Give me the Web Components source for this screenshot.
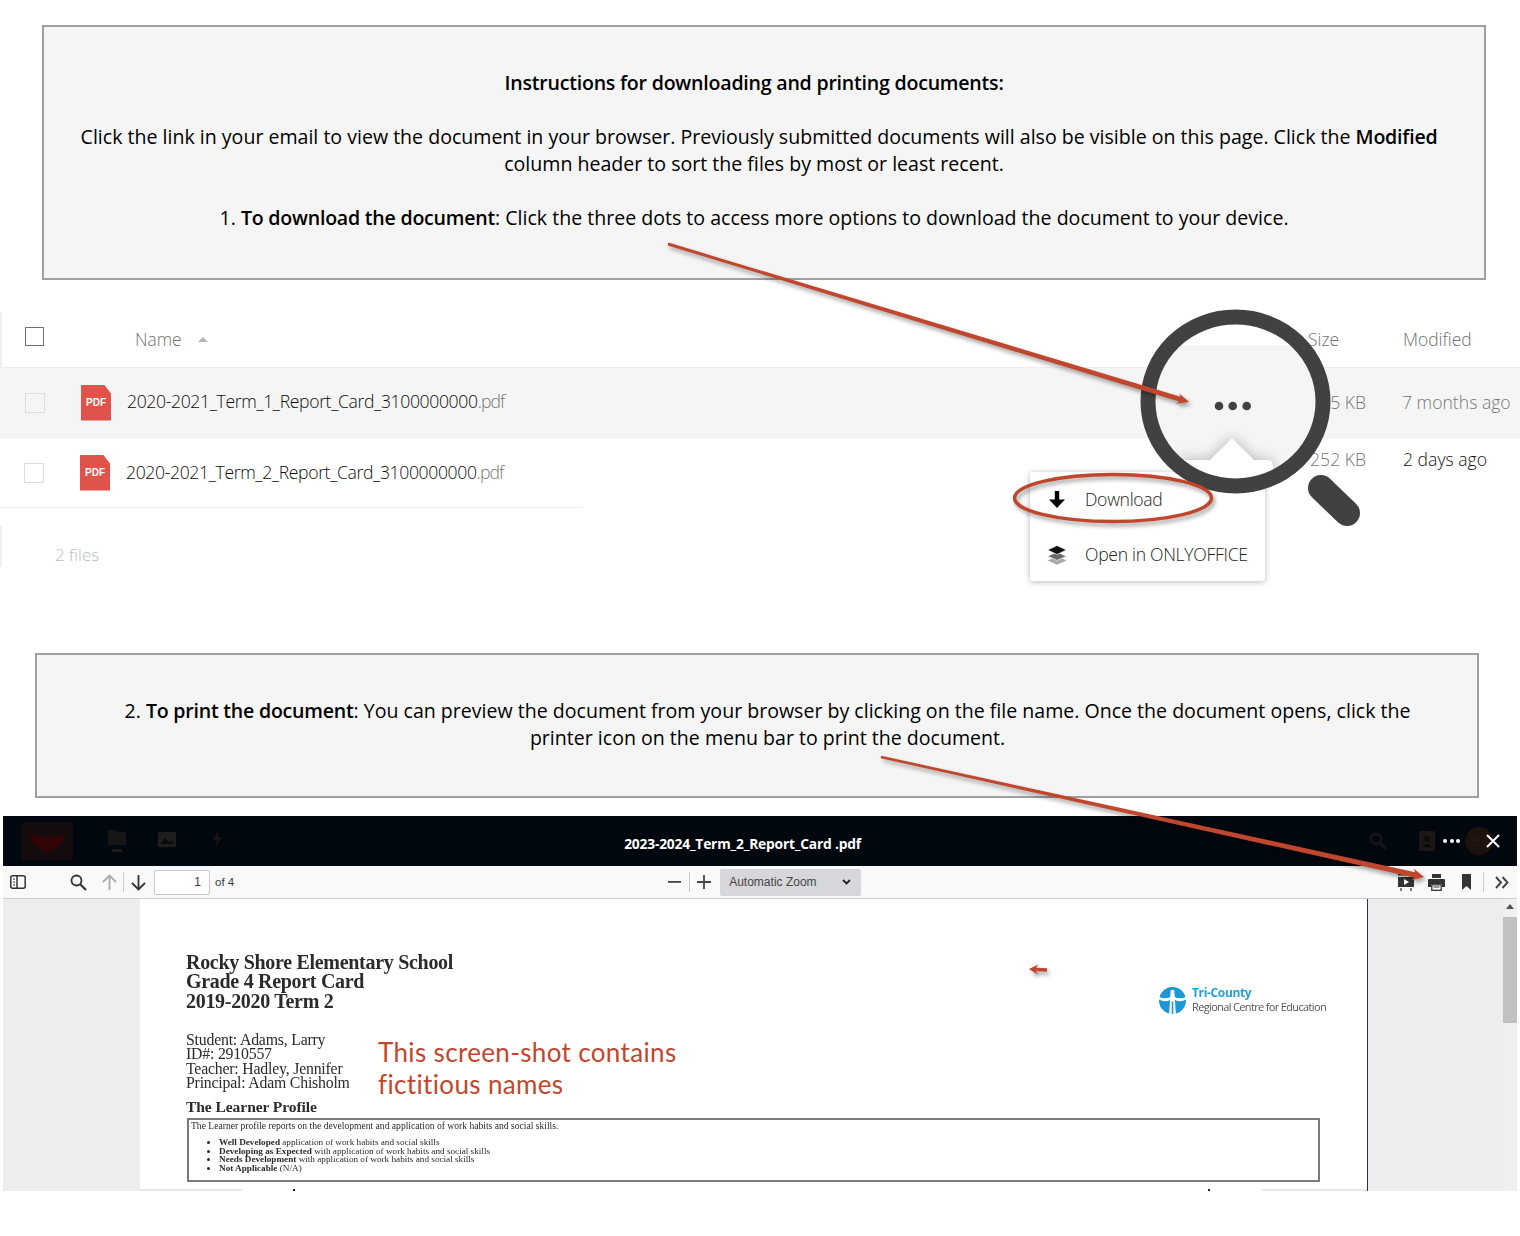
<!DOCTYPE html>
<html lang="en">
<head>
<meta charset="utf-8">
<title>Instructions for downloading and printing documents</title>
<style>
  html, body { margin: 0; padding: 0; background: #fff; }
</style>
</head>
<body>
<report-page>
  <note-box style="--box-left: 42px; --box-top: 25px; --box-height: 255px; --pad-r: 20px">
    <strong>Instructions for downloading and printing documents:</strong><br><br>
    <span style="padding-left: 10px">Click the link in your email to view the document in your browser. Previously submitted documents will also be visible on this page. Click the <b style="font-weight: 600; letter-spacing: -0.22px">Modified</b></span><br>
    column header to sort the files by most or least recent.<br><br>
    1. <strong>To download the document</strong>: Click the three dots to access more options to download the document to your device.
  </note-box>

  <file-list style="--list-top: 32px">
    <file-row name="2020-2021_Term_1_Report_Card_3100000000" ext=".pdf" size="5 KB" modified="7 months ago" hovered></file-row>
    <file-row name="2020-2021_Term_2_Report_Card_3100000000" ext=".pdf" size="252 KB" modified="2 days ago" recent></file-row>
  </file-list>

  <note-box style="--box-left: 35px; --box-top: 86px; --box-height: 145px; --pad-l: 21px">
    2. <strong>To print the document</strong>: You can preview the document from your browser by clicking on the file name. Once the document opens, click the<br>
    printer icon on the menu bar to print the document.
  </note-box>

  <pdf-viewer title-text="2023-2024_Term_2_Report_Card .pdf">
    <report-doc></report-doc>
  </pdf-viewer>

  <action-menu></action-menu>
  <annotation-layer></annotation-layer>
</report-page>

<script>
// page frame
class ReportPage extends HTMLElement {
  constructor() {
    super()
    this.attachShadow({ mode: 'open' })
    this.shadowRoot.innerHTML = `
      <style>
        :host { display: block; position: relative; width: 1520px; height: 1236px; overflow: hidden; background: #fff; }
      </style>
      <slot></slot>
    `
  }
}

// grey instruction box
class NoteBox extends HTMLElement {
  constructor() {
    super()
    this.attachShadow({ mode: 'open' })
    this.shadowRoot.innerHTML = `
      <style>
        :host {
          display: block;
          box-sizing: border-box;
          width: 1444px;
          height: var(--box-height);
          margin: var(--box-top) 0 0 var(--box-left);
          padding: 42px var(--pad-r, 0) 0 var(--pad-l, 0);
          border: 2px solid #a0a0a0;
          background: #f5f5f5;
          color: #000;
          font: 400 19.57px/27px "Open Sans", sans-serif;
          text-align: center;
          white-space: nowrap;
        }
        ::slotted(strong) { font-weight: 600; letter-spacing: -0.22px; }
      </style>
      <slot></slot>
    `
  }
}

// file table with its header and footer
class FileList extends HTMLElement {
  constructor() {
    super()
    this.attachShadow({ mode: 'open' })
    this.shadowRoot.innerHTML = `
      <style>
        :host {
          display: block;
          margin-top: var(--list-top);
          font-family: "Open Sans", sans-serif;
          font-weight: 300;
        }
        .head {
          display: flex;
          align-items: center;
          height: 55px;
          box-sizing: border-box;
          padding-left: 25px;
          border-left: 2px solid #f0f0f0;
          font-size: 17.4px;
          color: #6f6f6f;
        }
        .check { width: 17px; height: 17px; border: 1.5px solid #707070; margin-left: -2px; margin-bottom: 6px; }
        .name { margin-left: 91px; margin-bottom: 2px; }
        .sort { width: 0; height: 0; margin-left: 16px; border: 5px solid transparent; border-top: 0; border-bottom: 5px solid #b5b5b5; }
        .size { margin-left: auto; margin-bottom: 2px; }
        .modified { width: 117px; margin-left: 64px; margin-bottom: 2px; }
        .rows { border-top: 1px solid #ededed; }
        .rule { width: 583px; height: 1px; background: #ececec; }
        .foot {
          margin-top: 18px;
          height: 41px;
          padding-left: 53px;
          border-left: 2px solid #f0f0f0;
          box-sizing: border-box;
          font-size: 17px;
          line-height: 58px;
          color: #bcbcbc;
        }
      </style>
      <div class="head">
        <span class="check"></span>
        <span class="name">Name</span>
        <span class="sort"></span>
        <span class="size">Size</span>
        <span class="modified">Modified</span>
      </div>
      <div class="rows"><slot></slot></div>
      <div class="rule"></div>
      <div class="foot">2 files</div>
    `
  }
}

class FileRow extends HTMLElement {
  constructor() {
    super()
    this.attachShadow({ mode: 'open' })
  }

  connectedCallback() {
    const a = (n) => this.getAttribute(n) || ''
    this.shadowRoot.innerHTML = `
      <style>
        :host {
          display: flex;
          align-items: center;
          box-sizing: border-box;
          height: 69px;
          padding-left: 24px;
          font-size: 17.6px;
          color: #0c0c0c;
        }
        :host([hovered]) { height: 70px; padding-left: 25px; background: #f5f5f5; border-bottom: 1px solid #ececec; }
        .check { box-sizing: border-box; width: 20px; height: 20px; border: 1px solid #dcdcdc; background: #fff; }
        :host([hovered]) .check { background: #f5f5f5; }
        .pdf {
          width: 30px;
          height: 36px;
          margin-left: 36px;
          background: #e0534a;
          clip-path: polygon(0 0, 23px 0, 30px 9px, 30px 36px, 0 36px);
          color: #fff;
          font: 700 10px/36px "Liberation Sans", sans-serif;
          text-align: center;
        }
        .file { margin-left: 16px; padding-bottom: 3px; letter-spacing: -0.37px; }
        :host([recent]) .file { padding-bottom: 1px; }
        .ext { color: #777; letter-spacing: -0.9px; }
        .meta { color: #777; padding-bottom: 2px; }
        .size { margin-left: auto; width: 70px; text-align: right; }
        .when { width: 118px; margin-left: 36px; }
        :host([recent]) .meta { padding-bottom: 28px; }
        :host([recent]) .when { color: #111; width: 117px; margin-left: 37px; }
      </style>
      <span class="check"></span>
      <span class="pdf">PDF</span>
      <span class="file">${a('name')}<span class="ext">${a('ext')}</span></span>
      <span class="meta size">${a('size')}</span>
      <span class="meta when">${a('modified')}</span>
    `
  }
}

// popup under the three dots
class ActionMenu extends HTMLElement {
  constructor() {
    super()
    this.attachShadow({ mode: 'open' })
    this.shadowRoot.innerHTML = `
      <style>
        :host {
          display: block;
          position: absolute;
          left: 1030px;
          top: 472px;
          width: 235px;
          height: 109px;
          background: #fff;
          border-radius: 3px;
          box-shadow: 0 1px 6px rgba(0,0,0,.28);
          font: 300 17.6px "Open Sans", sans-serif;
          color: #222;
        }
        .item { display: flex; align-items: center; height: 55px; padding-left: 17px; }
        svg { width: 20px; height: 20px; flex: none; margin-right: 18px; }
        .label { letter-spacing: -0.3px; padding-bottom: 2px; }
      </style>
      <div class="item">
        <svg viewBox="0 0 20 20"><path d="M7.8 1h4.4v8.5H18L10 18 2 9.500h5.800z" fill="#000"/></svg>
        <span class="label">Download</span>
      </div>
      <div class="item">
        <svg viewBox="0 0 20 20">
          <path d="M10 11.500 19.500 15.600 10 19.800.5 15.600z" fill="#a8a8a8"/>
          <path d="M10 7 19.500 11.200 10 15.400.5 11.200z" fill="#6a6a6a" stroke="#fff" stroke-width=".7"/>
          <path d="M10 .5 19.500 5 10 9.500.5 5z" fill="#111" stroke="#fff" stroke-width=".7"/>
        </svg>
        <span class="label">Open in ONLYOFFICE</span>
      </div>
    `
  }
}

// arrows, ellipse and magnifier drawn on top of the screenshot
class AnnotationLayer extends HTMLElement {
  constructor() {
    super()
    this.attachShadow({ mode: 'open' })
  }

  // tapered shaft plus a stealth head, from tail to tip
  _arrow(x1, y1, x2, y2, w1, w2, headLen, headW) {
    const len = Math.hypot(x2 - x1, y2 - y1)
    const ux = (x2 - x1) / len, uy = (y2 - y1) / len
    const nx = -uy, ny = ux
    const pt = (along, side) => `${(x1 + ux * along + nx * side).toFixed(1)},${(y1 + uy * along + ny * side).toFixed(1)}`
    const neck = len - headLen * 0.8
    return [
      pt(0, w1 / 2), pt(neck, w2 / 2), pt(len - headLen, headW / 2), pt(len, 0),
      pt(len - headLen, -headW / 2), pt(neck, -w2 / 2), pt(0, -w1 / 2)
    ].join(' ')
  }

  connectedCallback() {
    const red = '#c0472d'
    this.shadowRoot.innerHTML = `
      <style>
        :host { display: block; position: absolute; left: 0; top: 0; width: 1520px; height: 1236px; pointer-events: none; }
        svg { display: block; }
        .shadow { filter: drop-shadow(2px 3px 2px rgba(0,0,0,.38)); }
        .soft { filter: drop-shadow(0 0 7px rgba(0,0,0,.28)); }
      </style>
      <svg width="1520" height="1236" viewBox="0 0 1520 1236">
        <defs>
          <clipPath id="lens"><ellipse cx="1235.500" cy="401.500" rx="88" ry="85"/></clipPath>
        </defs>
        <g clip-path="url(#lens)">
          <rect x="1130" y="300" width="210" height="200" fill="#fff"/>
          <rect x="1130" y="346" width="210" height="1" fill="#ececec"/>
          <rect x="1130" y="347" width="210" height="150" fill="#f5f5f5"/>
          <g class="soft">
            <path d="M1232 438 1254 460H1267Q1273 460 1273 466V500H1180V460H1210z" fill="#fff"/>
          </g>
          <circle cx="1219" cy="406" r="4.300" fill="#414141"/>
          <circle cx="1232.700" cy="406" r="4.300" fill="#414141"/>
          <circle cx="1246.700" cy="406" r="4.300" fill="#414141"/>
        </g>
        <ellipse cx="1235.500" cy="401.500" rx="87.500" ry="84.500" fill="none" stroke="#414141" stroke-width="15"/>
        <line x1="1321" y1="488" x2="1347" y2="513" stroke="#414141" stroke-width="26" stroke-linecap="round"/>
        <g class="shadow">
          <ellipse cx="1113" cy="498" rx="98.500" ry="23.500" fill="none" stroke="${red}" stroke-width="3.500"/>
          <polygon points="${this._arrow(668, 244, 1189, 402, 3, 5, 12, 11)}" fill="${red}"/>
          <polygon points="${this._arrow(881, 757, 1424, 877, 2.5, 5.5, 12, 12)}" fill="${red}"/>
          <polygon points="${this._arrow(1047, 970, 1029, 969, 3.500, 3.500, 9, 10)}" fill="${red}"/>
        </g>
      </svg>
    `
  }
}

// dark title bar, toolbar and scrolling document area
class PdfViewer extends HTMLElement {
  constructor() {
    super()
    this.attachShadow({ mode: 'open' })
  }

  connectedCallback() {
    this.shadowRoot.innerHTML = `
      <style>
        :host { display: block; width: 1514px; margin: 18px 0 0 3px; }
        .title-bar {
          display: flex;
          align-items: center;
          height: 50px;
          background: #00070f;
        }
        .logo { width: 52px; height: 38px; margin-left: 18px; padding-top: 3px; box-sizing: border-box; background: #140c0c; border-radius: 4px; display: grid; place-items: center; }
        .title {
          flex: 1;
          padding: 4px 106px 0 0;
          color: #fff;
          font: 700 13.8px "Open Sans", sans-serif;
          letter-spacing: -0.2px;
          text-align: center;
        }
        .tools-r { display: flex; align-items: center; margin-right: 16px; }
        .dots { display: flex; gap: 2.5px; margin-left: 8px; }
        .dots i { width: 4px; height: 4px; border-radius: 50%; background: #fff; }
        .avatar { width: 28px; height: 28px; border-radius: 50%; background: #1b110d; margin-left: 5px; color: #23160f; font: 700 14px/28px "Liberation Sans", sans-serif; text-align: center; }
        .close { margin-left: -8px; }

        .toolbar {
          display: flex;
          align-items: center;
          height: 33px;
          box-sizing: border-box;
          background: #f9f9fa;
          border-bottom: 1px solid #cfcfd1;
          color: #3a3a3a;
          font: 400 11.500px "Liberation Sans", sans-serif;
        }
        .toolbar svg { display: block; flex: none; }
        .sep { width: 1px; height: 20px; background: #c8c8ca; flex: none; }
        .page-input {
          width: 56px;
          height: 25px;
          margin-left: 8px;
          box-sizing: border-box;
          padding-right: 8px;
          border: 1px solid #c8c8cc;
          border-radius: 2px;
          background: #fff;
          text-align: right;
          line-height: 23px;
          font-size: 12px;
        }
        .of { margin-left: 5px; }
        .zoom {
          display: flex;
          align-items: center;
          justify-content: space-between;
          box-sizing: border-box;
          width: 141px;
          height: 27px;
          margin-left: 9px;
          padding: 0 10px 0 9px;
          border-radius: 2px;
          background: #d7d7db;
          font-size: 12px;
          color: #444;
        }

        .body { display: flex; height: 292px; background: #ededf0; }
        .gutter-l { width: 137px; flex: none; }
        .page { width: 1227px; flex: none; background: #fff; border-right: 1px solid #333; }
        .gutter-r { flex: 1; }
        .scroll { width: 14px; flex: none; background: #f0f0f0; display: flex; flex-direction: column; align-items: center; padding-top: 5px; box-sizing: border-box; }
        .scroll b { width: 0; height: 0; border: 4px solid transparent; border-top: 0; border-bottom: 5px solid #505050; }
        .scroll i { display: block; width: 14px; height: 106px; margin-top: 8px; background: #c1c1c1; }
      </style>
      <div class="title-bar">
        <span class="logo">
          <svg width="46" height="20" viewBox="0 0 42 22"><path d="M0 1 12 4H30L42 1 34 13 22 21H20L8 13z" fill="#360304"/><path d="M12 4 21 13 30 4M14 16 21 11 28 16" fill="none" stroke="#140c0c" stroke-width="1"/></svg>
        </span>
        <svg width="18" height="26" viewBox="0 0 18 26" style="margin-left:35px"><path d="M0 2H7L9 4H18V17H0z" fill="#161616"/><rect x="4" y="21" width="10" height="3" fill="#1c1c1c"/></svg>
        <svg width="18" height="15" viewBox="0 0 18 15" style="margin-left:32px;margin-bottom:4px"><rect width="18" height="15" fill="#1e1e1e"/><path d="M2 12 7 6 11 10 13 8 16 12z" fill="#0a0a0a"/></svg>
        <svg width="9" height="16" viewBox="0 0 9 16" style="margin-left:37px;margin-bottom:4px"><path d="M5 0 0 9H4L3 16 9 6H5z" fill="#1c1410"/></svg>
        <span class="title">${this.getAttribute('title-text') || ''}</span>
        <span class="tools-r">
          <svg width="18" height="18" viewBox="0 0 18 18" style="margin-right:32px"><circle cx="7" cy="7" r="5" fill="none" stroke="#161616" stroke-width="2.500"/><path d="M11 11 17 17" stroke="#161616" stroke-width="2.500"/></svg>
          <svg width="16" height="20" viewBox="0 0 18 20" preserveAspectRatio="none"><rect width="18" height="20" rx="2" fill="#1c1714"/><circle cx="9" cy="8" r="3" fill="#0a0a0a"/><path d="M4 16Q9 10 14 16z" fill="#0a0a0a"/></svg>
          <span class="dots"><i></i><i></i><i></i></span>
          <span class="avatar">BJ</span>
          <svg class="close" width="16" height="16" viewBox="0 0 16 16"><path d="M2 2 14 14M14 2 2 14" stroke="#fff" stroke-width="2"/></svg>
        </span>
      </div>
      <div class="toolbar">
        <svg width="16" height="14" viewBox="0 0 16 14" style="margin-left:7px"><rect x=".8" y=".8" width="14.400" height="12.400" rx="2" fill="none" stroke="#333" stroke-width="1.500"/><path d="M7 1V13" stroke="#333" stroke-width="1.500"/><path d="M3 4H5M3 7H5M3 10H5" stroke="#333" stroke-width="1.200"/></svg>
        <svg width="17" height="17" viewBox="0 0 17 17" style="margin-left:44px"><circle cx="6.500" cy="6.500" r="5" fill="none" stroke="#333" stroke-width="1.800"/><path d="M10.500 10.500 16 16" stroke="#333" stroke-width="2.200"/></svg>
        <svg width="15" height="17" viewBox="0 0 15 17" style="margin-left:15px"><path d="M7.500 16V2M1 8 7.500 1.500 14 8" fill="none" stroke="#a9a9a9" stroke-width="1.800"/></svg>
        <span class="sep" style="margin-left:6px"></span>
        <svg width="15" height="17" viewBox="0 0 15 17" style="margin-left:7px"><path d="M7.500 1V15M1 9 7.500 15.500 14 9" fill="none" stroke="#333" stroke-width="1.800"/></svg>
        <span class="page-input">1</span>
        <span class="of">of 4</span>
        <svg width="13" height="2" viewBox="0 0 13 2" style="margin-left:434px"><rect width="13" height="1.800" fill="#444"/></svg>
        <span class="sep" style="margin-left:8px"></span>
        <svg width="14" height="14" viewBox="0 0 14 14" style="margin-left:7px"><path d="M7 0V14M0 7H14" stroke="#444" stroke-width="1.800"/></svg>
        <span class="zoom">Automatic Zoom
          <svg width="9" height="6" viewBox="0 0 9 6"><path d="M1 1 4.500 4.500 8 1" fill="none" stroke="#222" stroke-width="1.800"/></svg>
        </span>
        <svg width="16" height="17" viewBox="0 0 16 17" style="margin-left:537px"><rect y="0" width="16" height="1.500" fill="#333"/><rect y="3" width="16" height="10" fill="#333"/><path d="M6 5 11 8 6 11z" fill="#fff"/><path d="M3 14V17M13 14V17" stroke="#333" stroke-width="1.200"/></svg>
        <svg width="17" height="17" viewBox="0 0 17 17" style="margin-left:14px"><path d="M4 0H13V4H4z" fill="#333"/><path d="M1 5H16Q17 5 17 6V13H14V10H3V13H0V6Q0 5 1 5z" fill="#333"/><rect x="3.800" y="10.800" width="9.400" height="5.500" fill="#fff" stroke="#333" stroke-width="1.300"/><path d="M5.500 13H11.500" stroke="#333"/></svg>
        <svg width="9" height="16" viewBox="0 0 9 16" style="margin-left:17px"><path d="M0 0H9V16L4.500 12 0 16z" fill="#333"/></svg>
        <span class="sep" style="margin-left:12px"></span>
        <svg width="14" height="13" viewBox="0 0 14 13" style="margin-left:11px"><path d="M1 1 6 6.500 1 12M7.500 1 12.500 6.500 7.500 12" fill="none" stroke="#444" stroke-width="1.900"/></svg>
      </div>
      <div class="body">
        <div class="gutter-l"></div>
        <div class="page"><slot></slot></div>
        <div class="gutter-r"></div>
        <div class="scroll"><b></b><i></i></div>
      </div>
    `
  }
}

// the report card page shown in the viewer
class ReportDoc extends HTMLElement {
  constructor() {
    super()
    this.attachShadow({ mode: 'open' })
    this.shadowRoot.innerHTML = `
      <style>
        :host {
          display: flex;
          flex-direction: column;
          box-sizing: border-box;
          height: 292px;
          padding-top: 53.500px;
          font-family: "Liberation Serif", serif;
          color: #2b2b2b;
        }
        .soft { filter: blur(.3px); }
        .top { display: flex; justify-content: space-between; align-items: flex-end; padding: 0 41px 0 46px; }
        h1 { margin: 0; font-size: 20px; line-height: 19.500px; font-weight: 700; letter-spacing: -0.3px; }
        .logo { display: flex; align-items: center; gap: 6px; margin-bottom: -3px; }
        .logo-text { font-family: "Open Sans", sans-serif; line-height: 14px; white-space: nowrap; }
        .tri { color: #22a0da; font-size: 12px; font-weight: 700; letter-spacing: -0.35px; }
        .reg { color: #555; font-size: 11px; letter-spacing: -0.65px; }
        .mid { display: flex; padding-left: 46px; margin-top: 22px; }
        .who { width: 192px; font-size: 15.800px; line-height: 14.300px; letter-spacing: -0.2px; }
        .fake { font: 400 26px/32px "Lato", sans-serif; color: #c0472d; padding-top: 3px; letter-spacing: .35px; }
        h2 { margin: -3px 0 0 46px; font-size: 15.600px; line-height: 20px; letter-spacing: -0.1px; }
        .profile {
          box-sizing: border-box;
          width: 1133px;
          height: 64px;
          margin: 1px 0 0 47px;
          padding: 1px 2px;
          border: 2px solid #7a7a7a;
          font-size: 9.600px;
          line-height: 9px;
        }
        ul { margin: 8px 0 0; padding: 0 0 0 28px; font-size: 9.200px; line-height: 8.700px; }
        li b { font-weight: 700; }
        .edge { display: flex; height: 2px; margin-top: auto; }
        .edge i { background: #e8e8ee; }
        .edge b { width: 2px; background: #222; }
      </style>
      <div class="top soft">
        <h1>Rocky Shore Elementary School<br>Grade 4 Report Card<br>2019-2020 Term 2</h1>
        <div class="logo">
          <svg width="27" height="27" viewBox="0 0 28 28">
            <circle cx="14" cy="14" r="14" fill="#1e98d4"/>
            <path d="M0 10Q7 14 14 9 21 14 28 10V13Q21 17 14 12 7 17 0 13z" fill="#fff"/>
            <path d="M12 6H16L17.500 28H10.500z" fill="#fff"/>
            <circle cx="14" cy="5" r="2.200" fill="#fff"/>
            <path d="M13.200 15H14.800V28H13.200z" fill="#1e98d4"/>
          </svg>
          <div class="logo-text"><div class="tri">Tri-County</div><div class="reg">Regional Centre for Education</div></div>
        </div>
      </div>
      <div class="mid">
        <div class="who soft">Student: Adams, Larry<br>ID#: 2910557<br>Teacher: Hadley, Jennifer<br>Principal: Adam Chisholm</div>
        <div class="fake">This screen-shot contains<br>fictitious names</div>
      </div>
      <h2 class="soft">The Learner Profile</h2>
      <div class="profile soft">
        The Learner profile reports on the development and application of work habits and social skills.
        <ul>
          <li><b>Well Developed</b> application of work habits and social skills</li>
          <li><b>Developing as Expected</b> with application of work habits and social skills</li>
          <li><b>Needs Development</b> with application of work habits and social skills</li>
          <li><b>Not Applicable</b> (N/A)</li>
        </ul>
      </div>
      <div class="edge">
        <i style="width:102px"></i><span style="width:51px"></span><b></b><span style="width:913px"></span><b></b><span style="width:52px"></span><i style="width:105px"></i>
      </div>
    `
  }
}

customElements.define('report-page', ReportPage)
customElements.define('note-box', NoteBox)
customElements.define('file-list', FileList)
customElements.define('file-row', FileRow)
customElements.define('action-menu', ActionMenu)
customElements.define('annotation-layer', AnnotationLayer)
customElements.define('pdf-viewer', PdfViewer)
customElements.define('report-doc', ReportDoc)
</script>
</body>
</html>
